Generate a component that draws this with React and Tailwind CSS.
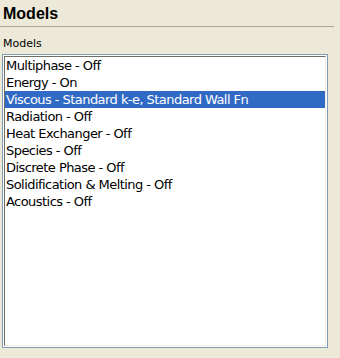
import React from 'react';

const models = [
  'Multiphase - Off',
  'Energy - On',
  'Viscous - Standard k-e, Standard Wall Fn',
  'Radiation - Off',
  'Heat Exchanger - Off',
  'Species - Off',
  'Discrete Phase - Off',
  'Solidification & Melting - Off',
  'Acoustics - Off',
];

export default function App() {
  const selected = 2;

  return (
    <div className="w-[340px] h-[358px] bg-[#ece9d8] overflow-hidden font-['Liberation_Sans',Arial,sans-serif]">
      {/* Header */}
      <div className="mr-[6px] h-[27px] border-b border-[#aca899] pl-[3px] pt-[4px]">
        <div className="text-[16px] leading-[20px] font-bold text-black">Models</div>
      </div>

      <div className="pl-[3px] pt-[10px] h-[27px]">
        <div className="text-[11px] leading-[14px] text-black font-['DejaVu_Sans',sans-serif]">Models</div>
      </div>

      {/* List box */}
      <div className="ml-[2px] w-[326px] h-[294px] border border-[#7f9db9] bg-white p-[1px]">
        <div className="h-full border border-t-[#716f64] border-l-[#716f64] border-r-[#f1efe2] border-b-[#f1efe2] bg-white font-['DejaVu_Sans',sans-serif]">
          {models.map((m, i) => (
            <div
              key={m}
              className={
                i === selected
                  ? 'h-[17px] pl-[1px] text-[13px] leading-[17px] tracking-[-0.55px] bg-[#316ac5] text-white whitespace-nowrap'
                  : 'h-[17px] pl-[1px] text-[13px] leading-[17px] tracking-[-0.55px] text-black whitespace-nowrap'
              }
            >
              {m}
            </div>
          ))}
        </div>
      </div>
    </div>
  );
}
